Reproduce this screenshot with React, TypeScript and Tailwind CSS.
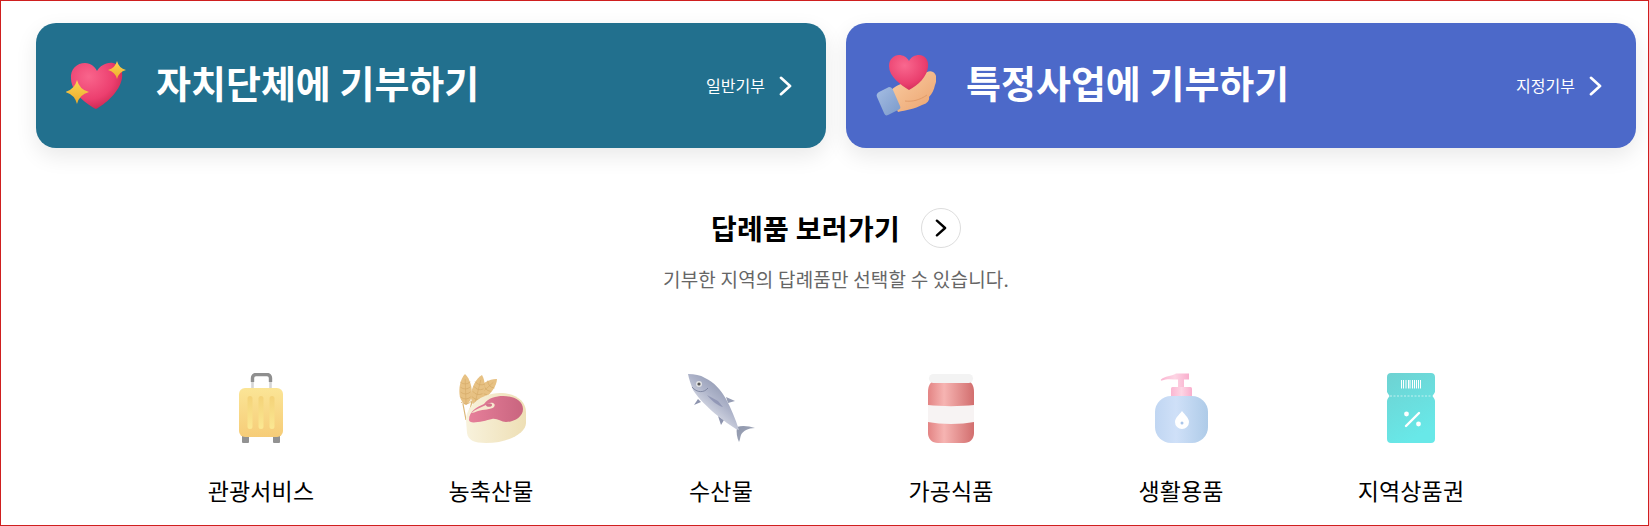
import type { ReactNode } from "react";

function Chevron({ className }: { className: string }) {
  return (
    <svg viewBox="0 0 14 22" className={className} fill="none" stroke="currentColor" strokeWidth="2.9" strokeLinecap="round" strokeLinejoin="round">
      <path d="M2 2l10 9-10 9" />
    </svg>
  );
}

function star(cx: number, cy: number, r: number) {
  const k = r * 0.2;
  return `M${cx} ${cy - r}Q${cx + k} ${cy - k} ${cx + r} ${cy}Q${cx + k} ${cy + k} ${cx} ${cy + r}Q${cx - k} ${cy + k} ${cx - r} ${cy}Q${cx - k} ${cy - k} ${cx} ${cy - r}Z`;
}

function SparkleHeart() {
  return (
    <svg viewBox="0 0 60 50" className="h-[50px] w-[60px] shrink-0">
      <defs>
        <radialGradient id="hg1" cx="35%" cy="30%" r="75%">
          <stop offset="0%" stopColor="#f9658c" />
          <stop offset="65%" stopColor="#ec3f6f" />
          <stop offset="100%" stopColor="#c9264f" />
        </radialGradient>
        <linearGradient id="st1" x1="0" y1="0" x2="0" y2="1">
          <stop offset="0%" stopColor="#fbd653" />
          <stop offset="100%" stopColor="#eeaa2b" />
        </linearGradient>
      </defs>
      <path d="M30 48C22 44 6 33 5 18C4 8 11 2 19 2C25 2 29 6 31 10C34 5 40 1 47 2C54 3 57 10 56 17C54 31 38 44 30 48Z" fill="url(#hg1)" />
      <path d={star(11, 31, 12)} fill="url(#st1)" />
      <path d={star(51, 9, 9)} fill="url(#st1)" />
    </svg>
  );
}

function HeartHand() {
  return (
    <svg viewBox="0 0 60 62" className="h-[62px] w-[60px] shrink-0">
      <defs>
        <radialGradient id="hg2" cx="40%" cy="30%" r="75%">
          <stop offset="0%" stopColor="#f9688f" />
          <stop offset="70%" stopColor="#ea3f6e" />
          <stop offset="100%" stopColor="#cf2d58" />
        </radialGradient>
        <linearGradient id="hand" x1="0" y1="0" x2="1" y2="1">
          <stop offset="0%" stopColor="#fbcfa6" />
          <stop offset="100%" stopColor="#eba36e" />
        </linearGradient>
        <linearGradient id="cuff" x1="0" y1="0" x2="1" y2="1">
          <stop offset="0%" stopColor="#a5bde2" />
          <stop offset="100%" stopColor="#7b9acb" />
        </linearGradient>
      </defs>
      <path d="M13 37C19 31 25 28 31 28L47 20C50 17 54 15 57 17C61 19 61 25 59 30C58 35 56 39 53 42C54 46 50 49 46 50C39 54 30 55 22 57Z" fill="url(#hand)" />
      <path d="M29 46C36 47 44 45 51 40" fill="none" stroke="#dd9662" strokeWidth="0.8" />
      <path d="M3 37L13 32C15 32 16 33 17 35L24 51C25 53 24 54 22 55L12 60C10 61 9 60 8 58L1 42C0 40 1 38 3 37Z" fill="url(#cuff)" />
      <path d="M33 35C25 30 13 22 13 11C13 4 18 0 23 0C27 0 31 2 33 6C35 2 39 0 43 0C49 0 53 5 52 12C51 22 42 30 33 35Z" fill="url(#hg2)" />
    </svg>
  );
}

function Suitcase() {
  return (
    <svg viewBox="0 0 70 70" className="h-[70px] w-[70px]">
      <defs>
        <linearGradient id="sc" x1="0" y1="0" x2="0" y2="1">
          <stop offset="0%" stopColor="#fbe596" />
          <stop offset="100%" stopColor="#f6cc78" />
        </linearGradient>
        <linearGradient id="scs" x1="0" y1="0" x2="0" y2="1">
          <stop offset="0%" stopColor="#f4d278" />
          <stop offset="100%" stopColor="#fbe893" />
        </linearGradient>
      </defs>
      <path d="M26.5 16V7M44.5 16V7" stroke="#d6d6d6" strokeWidth="2.6" />
      <path d="M26.5 9V5a3.500 3.500 0 0 1 3.500-3.500h11a3.500 3.500 0 0 1 3.500 3.500v4" fill="none" stroke="#8f8f8f" strokeWidth="3.400" />
      <rect x="16" y="62" width="7" height="8" rx="1" fill="#929292" />
      <rect x="47" y="62" width="7" height="8" rx="1" fill="#929292" />
      <rect x="13" y="15" width="44" height="49" rx="6" fill="url(#sc)" />
      <rect x="21.5" y="23" width="5" height="33" rx="2.5" fill="url(#scs)" />
      <rect x="32.5" y="23" width="5" height="33" rx="2.5" fill="url(#scs)" />
      <rect x="43.5" y="23" width="5" height="33" rx="2.5" fill="url(#scs)" />
    </svg>
  );
}

function Ear({ x, y, angle }: { x: number; y: number; angle: number }) {
  return (
    <g transform={`translate(${x} ${y}) rotate(${angle})`}>
      <path d="M0 0C5 5 7 14 6 22C5 27 2 30 0 31C-2 30 -5 27 -6 22C-7 14 -5 5 0 0Z" fill="#e7c183" />
      {[6, 11, 16, 21, 26].map((d) => (
        <path key={d} d={`M-5 ${d + 2}Q0 ${d + 6} 5 ${d + 2}`} fill="none" stroke="#d6ab68" strokeWidth="0.700" />
      ))}
      <path d="M0 5V29" stroke="#d6ab68" strokeWidth="0.600" />
    </g>
  );
}

function MeatWheat() {
  return (
    <svg viewBox="0 0 70 70" className="h-[70px] w-[70px]">
      <defs>
        <linearGradient id="mb" x1="0" y1="0" x2="1" y2="0">
          <stop offset="0%" stopColor="#f8f2dc" />
          <stop offset="100%" stopColor="#eedfb5" />
        </linearGradient>
        <linearGradient id="mp" x1="0" y1="0" x2="1" y2="0">
          <stop offset="0%" stopColor="#e67f9a" />
          <stop offset="100%" stopColor="#c9657f" />
        </linearGradient>
      </defs>
      <path d="M10 47L7 31M12 46L16 28M14 42L27 22" stroke="#dcb878" strokeWidth="1.200" fill="none" />
      <Ear x={41} y={6} angle={48} />
      <Ear x={26} y={2} angle={14} />
      <Ear x={9} y={1} angle={-2} />
      <path d="M10 47C10 34 24 20 44 20C59 20 70 28 70 39V50C70 60 52 70 30 70C18 70 12 67 11 60Z" fill="url(#mb)" />
      <path d="M13 47C13 38 21 34 28 31C32 25 40 23 47 23C58 23 67 28 67 36C67 44 58 49 50 49C45 49 41 45 36 46C28 48 13 52 13 47Z" fill="url(#mp)" />
      <path d="M15 40C20 36 26 34 30 32C34 28 41 30 38 34C35 37 27 36 22 38C19 39 17 40 15 40Z" fill="#f6e8cf" />
      <ellipse cx="33" cy="32" rx="3" ry="1.800" fill="#d3708a" />
    </svg>
  );
}

function Tuna() {
  return (
    <svg viewBox="0 0 70 70" className="h-[70px] w-[70px]">
      <defs>
        <linearGradient id="fs" x1="0.85" y1="0" x2="0.25" y2="0.75">
          <stop offset="0%" stopColor="#7a84a0" />
          <stop offset="55%" stopColor="#adb3c9" />
          <stop offset="100%" stopColor="#e6e8ef" />
        </linearGradient>
        <linearGradient id="ft" x1="0" y1="0" x2="1" y2="1">
          <stop offset="0%" stopColor="#8e96ac" />
          <stop offset="100%" stopColor="#a8aebd" />
        </linearGradient>
      </defs>
      <path d="M40 24L49 28L42 30Z" fill="#969db4" />
      <path d="M12 26L8 32L15 29Z" fill="#8d94ae" />
      <path d="M32 43L35 52L38 47Z" fill="#8d94ae" />
      <path d="M51 54C56 52 63 53 69 55C62 55 57 58 55 62C54 65 54 67 53 69C51 65 50 59 51 54Z" fill="url(#ft)" />
      <path d="M2 1C9 1 14 2 19 5C28 9 35 17 40 26C45 35 49 45 53 57L50 56C44 52 38 48 32 43C22 35 12 25 7 17C5 12 3 6 2 1Z" fill="url(#fs)" />
      <path d="M21 22L32 28L37 34C32 33 26 28 21 22Z" fill="#8a90b0" opacity="0.8" />
      <path d="M6 14C11 20 18 20 22 15" fill="none" stroke="#6a7290" strokeWidth="0.700" />
      <circle cx="13" cy="11" r="3" fill="#e3e4e6" />
      <circle cx="13" cy="11" r="1.600" fill="#555" />
    </svg>
  );
}

function Jar() {
  return (
    <svg viewBox="0 0 70 70" className="h-[70px] w-[70px]">
      <defs>
        <linearGradient id="jb" x1="0" y1="0" x2="1" y2="0">
          <stop offset="0%" stopColor="#e38484" />
          <stop offset="35%" stopColor="#f6b4b2" />
          <stop offset="100%" stopColor="#d26e6e" />
        </linearGradient>
      </defs>
      <path d="M17 8H53C56 10 58 13 58 19V60C58 66 54 70 48 70H22C16 70 12 66 12 60V19C12 13 14 10 17 8Z" fill="url(#jb)" />
      <rect x="13" y="1" width="44" height="9" rx="4.500" fill="#f3f3f3" />
      <path d="M12 32C25 33.500 45 33.500 58 32V49C45 51.500 25 51.500 12 49Z" fill="#f7f3f3" />
    </svg>
  );
}

function Pump() {
  return (
    <svg viewBox="0 0 70 70" className="h-[70px] w-[70px]">
      <defs>
        <linearGradient id="pb" x1="0" y1="0" x2="1" y2="0">
          <stop offset="0%" stopColor="#c0d6f2" />
          <stop offset="40%" stopColor="#cfe0f8" />
          <stop offset="100%" stopColor="#aecbe8" />
        </linearGradient>
        <linearGradient id="pp" x1="0" y1="0" x2="1" y2="0">
          <stop offset="0%" stopColor="#fbb6d2" />
          <stop offset="50%" stopColor="#fdd5e4" />
          <stop offset="100%" stopColor="#f9aecd" />
        </linearGradient>
      </defs>
      <path d="M15 6.500C19 3 25 3.500 30 0.500H43V6.500H38V15H32V6.500C26 6.500 21 5.500 16 7.500C15 8 14.500 7 15 6.500Z" fill="url(#pp)" />
      <rect x="25" y="14" width="21" height="10" rx="1.500" fill="url(#pp)" />
      <rect x="9" y="23" width="53" height="47" rx="16" fill="url(#pb)" />
      <path d="M36 38C39 42 43 45 43 49A7 7 0 0 1 29 49C29 45 33 42 36 38Z" fill="#fff" />
      <circle cx="36" cy="50" r="1.500" fill="#a9c5ea" />
    </svg>
  );
}

function Ticket() {
  return (
    <svg viewBox="0 0 70 70" className="h-[70px] w-[70px]">
      <defs>
        <linearGradient id="tk" x1="0" y1="0" x2="0.4" y2="1">
          <stop offset="0%" stopColor="#6ed2d2" />
          <stop offset="100%" stopColor="#68e8e8" />
        </linearGradient>
      </defs>
      <path d="M15 0H55C57.500 0 59 1.500 59 4V18.500C59 20 57.500 21 56.500 23C57.500 25 59 26 59 28V66C59 68.500 57.500 70 55 70H15C12.500 70 11 68.500 11 66V28C11 26 12.500 25 13.500 23C12.500 21 11 20 11 18.500V4C11 1.500 12.500 0 15 0Z" fill="url(#tk)" />
      <path d="M14 23H56" stroke="#e8fbfb" strokeWidth="0.700" strokeDasharray="2 1.500" />
      <path d="M25.500 7v8.500M27.500 7v8.500M30 7v8.500M32.500 7v8.500M34 7v8.500M36.500 7v8.500M38.500 7v8.500M40.500 7v8.500M42.500 7v8.500M44.500 7v8.500" stroke="#fff" strokeWidth="1" />
      <path d="M43 40L30 53" stroke="#fff" strokeWidth="2.400" strokeLinecap="round" />
      <circle cx="30.500" cy="41" r="2.400" fill="#fff" />
      <circle cx="42.500" cy="51" r="2.400" fill="#fff" />
    </svg>
  );
}

function DonateCard({ color, icon, title, sub }: { color: string; icon: ReactNode; title: string; sub: string }) {
  return (
    <a href="#" className={`flex h-[125px] flex-1 items-center rounded-[20px] pl-[30px] pr-[34px] text-white shadow-[0_8px_22px_rgba(0,0,0,0.09)] ${color}`}>
      {icon}
      <strong className="ml-[30px] flex-1 pb-[8px] text-[38px] font-bold leading-none">{title}</strong>
      <span className="mb-[2px] mr-[14px] text-[16px]">{sub}</span>
      <Chevron className="h-[20px] w-[13px]" />
    </a>
  );
}

const categories: { label: string; icon: ReactNode }[] = [
  { label: "관광서비스", icon: <Suitcase /> },
  { label: "농축산물", icon: <MeatWheat /> },
  { label: "수산물", icon: <Tuna /> },
  { label: "가공식품", icon: <Jar /> },
  { label: "생활용품", icon: <Pump /> },
  { label: "지역상품권", icon: <Ticket /> },
];

export default function App() {
  return (
    <div className="h-[526px] overflow-hidden border border-[#cf1f1f] bg-white font-['Noto_Sans_CJK_KR','Noto_Sans',sans-serif] text-black">
      <div className="ml-[35px] w-[1600px] pt-[22px]">
        <div className="flex gap-5">
          <DonateCard color="bg-[#22708e]" icon={<SparkleHeart />} title="자치단체에 기부하기" sub="일반기부" />
          <DonateCard color="bg-[#4c69c9]" icon={<HeartHand />} title="특정사업에 기부하기" sub="지정기부" />
        </div>

        <div className="mt-[60px] flex items-center justify-center gap-[21px]">
          <h2 className="text-[28px] font-bold leading-[40px] tracking-[0.3px]">답례품 보러가기</h2>
          <span className="flex h-[40px] w-[40px] items-center justify-center rounded-full border border-[#dddddd]">
            <Chevron className="h-[18px] w-[12px]" />
          </span>
        </div>
        <p className="mt-[18px] text-center text-[19px] leading-[26px] tracking-[0.2px] text-[#666666]">기부한 지역의 답례품만 선택할 수 있습니다.</p>

        <ul className="mt-[81px] flex justify-center">
          {categories.map((c) => (
            <li key={c.label} className="flex w-[230px] flex-col items-center">
              {c.icon}
              <span className="mt-[32px] text-[23px] leading-[30px] tracking-[0.1px]">{c.label}</span>
            </li>
          ))}
        </ul>
      </div>
    </div>
  );
}
